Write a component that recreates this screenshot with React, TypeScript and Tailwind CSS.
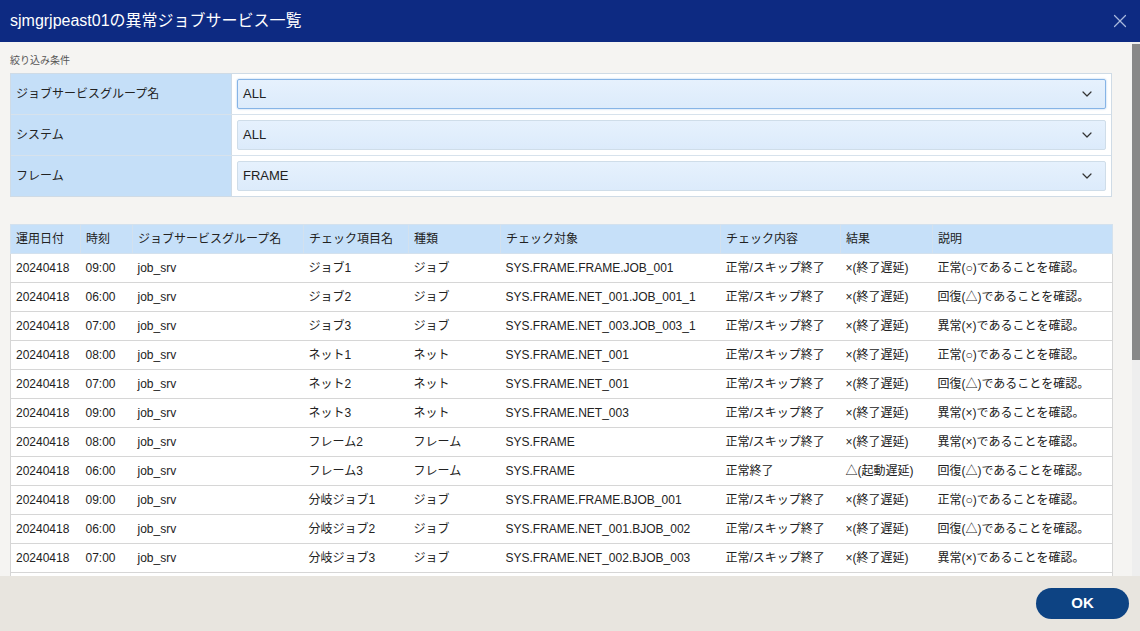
import { ChevronDown, X } from "lucide-react";

const FONT = { fontFamily: '"Liberation Sans", "Noto Sans CJK JP", sans-serif' };

interface Row {
  date: string;
  time: string;
  group: string;
  item: string;
  kind: string;
  target: string;
  content: string;
  result: string;
  desc: string;
}

const OK_DESC = "正常(○)であることを確認。";
const RECOVER_DESC = "回復(△)であることを確認。";
const NG_DESC = "異常(×)であることを確認。";

const rows: Row[] = [
  { date: "20240418", time: "09:00", group: "job_srv", item: "ジョブ1", kind: "ジョブ", target: "SYS.FRAME.FRAME.JOB_001", content: "正常/スキップ終了", result: "×(終了遅延)", desc: OK_DESC },
  { date: "20240418", time: "06:00", group: "job_srv", item: "ジョブ2", kind: "ジョブ", target: "SYS.FRAME.NET_001.JOB_001_1", content: "正常/スキップ終了", result: "×(終了遅延)", desc: RECOVER_DESC },
  { date: "20240418", time: "07:00", group: "job_srv", item: "ジョブ3", kind: "ジョブ", target: "SYS.FRAME.NET_003.JOB_003_1", content: "正常/スキップ終了", result: "×(終了遅延)", desc: NG_DESC },
  { date: "20240418", time: "08:00", group: "job_srv", item: "ネット1", kind: "ネット", target: "SYS.FRAME.NET_001", content: "正常/スキップ終了", result: "×(終了遅延)", desc: OK_DESC },
  { date: "20240418", time: "07:00", group: "job_srv", item: "ネット2", kind: "ネット", target: "SYS.FRAME.NET_001", content: "正常/スキップ終了", result: "×(終了遅延)", desc: RECOVER_DESC },
  { date: "20240418", time: "09:00", group: "job_srv", item: "ネット3", kind: "ネット", target: "SYS.FRAME.NET_003", content: "正常/スキップ終了", result: "×(終了遅延)", desc: NG_DESC },
  { date: "20240418", time: "08:00", group: "job_srv", item: "フレーム2", kind: "フレーム", target: "SYS.FRAME", content: "正常/スキップ終了", result: "×(終了遅延)", desc: NG_DESC },
  { date: "20240418", time: "06:00", group: "job_srv", item: "フレーム3", kind: "フレーム", target: "SYS.FRAME", content: "正常終了", result: "△(起動遅延)", desc: RECOVER_DESC },
  { date: "20240418", time: "09:00", group: "job_srv", item: "分岐ジョブ1", kind: "ジョブ", target: "SYS.FRAME.FRAME.BJOB_001", content: "正常/スキップ終了", result: "×(終了遅延)", desc: OK_DESC },
  { date: "20240418", time: "06:00", group: "job_srv", item: "分岐ジョブ2", kind: "ジョブ", target: "SYS.FRAME.NET_001.BJOB_002", content: "正常/スキップ終了", result: "×(終了遅延)", desc: RECOVER_DESC },
  { date: "20240418", time: "07:00", group: "job_srv", item: "分岐ジョブ3", kind: "ジョブ", target: "SYS.FRAME.NET_002.BJOB_003", content: "正常/スキップ終了", result: "×(終了遅延)", desc: NG_DESC },
];

const headers = ["運用日付", "時刻", "ジョブサービスグループ名", "チェック項目名", "種類", "チェック対象", "チェック内容", "結果", "説明"];
const widths = [70, 52, 171, 105, 92, 220, 120, 92, 180];

const filters = [
  { label: "ジョブサービスグループ名", value: "ALL", focused: true },
  { label: "システム", value: "ALL", focused: false },
  { label: "フレーム", value: "FRAME", focused: false },
];

function FilterSelect({ value, focused }: { value: string; focused: boolean }) {
  return (
    <div
      className={`flex h-[30px] items-center justify-between rounded-[2px] bg-gradient-to-b from-[#e6f1fd] to-[#dcebfb] pl-[5px] pr-[10px] text-[13px] text-[#222] ${
        focused ? "border border-[#86b4e6] shadow-[0_0_2px_#9cc3ec]" : "border border-[#cfdde9]"
      }`}
    >
      <span>{value}</span>
      <ChevronDown className="h-4 w-4 text-[#333]" strokeWidth={1.8} />
    </div>
  );
}

export default function App() {
  return (
    <div className="flex h-[631px] w-[1140px] flex-col overflow-hidden bg-[#f5f4f2]" style={FONT}>
      {/* title bar */}
      <div className="flex h-[42px] shrink-0 items-center justify-between bg-[#0d2a82] pl-[10px] pr-[9px]">
        <span className="text-[16px] text-white">sjmgrjpeast01の異常ジョブサービス一覧</span>
        <X className="h-[22px] w-[22px] text-[#a9b8dc]" strokeWidth={1.3} />
      </div>

      {/* body */}
      <div className="flex min-h-0 flex-1">
        <div className="min-w-0 flex-1 overflow-hidden pl-[10px] pr-[20px]">
          <div className="pt-[11px] text-[10px] leading-[15px] text-[#555]">絞り込み条件</div>

          <div className="mt-[5px] border border-[#cfdbe6] bg-white">
            {filters.map((f, i) => (
              <div key={f.label} className={`flex ${i > 0 ? "h-[41px] border-t border-[#d7e2ec]" : "h-[40px]"}`}>
                <div className="flex w-[221px] items-center border-r border-[#cfdbe6] bg-[#c5dff8] pl-[5px] text-[12px] text-[#222]">
                  {f.label}
                </div>
                <div className="flex flex-1 items-center px-[5px]">
                  <div className="flex-1">
                    <FilterSelect value={f.value} focused={f.focused} />
                  </div>
                </div>
              </div>
            ))}
          </div>

          <table className="mt-[27px] w-[1102px] table-fixed border-collapse bg-white text-[12px] text-[#222]">
            <colgroup>
              {widths.map((w, i) => (
                <col key={i} style={{ width: w }} />
              ))}
            </colgroup>
            <thead>
              <tr className="h-[29px] bg-[#c6e0f9]">
                {headers.map((h) => (
                  <th key={h} className="border border-[#d3e1ee] pl-[5px] text-left font-normal">
                    {h}
                  </th>
                ))}
              </tr>
            </thead>
            <tbody>
              {rows.map((r, i) => (
                <tr key={i} className="h-[29px] border-x border-[#d6d6d6]">
                  {[r.date, r.time, r.group, r.item, r.kind, r.target, r.content, r.result, r.desc].map((c, j) => (
                    <td key={j} className="whitespace-nowrap border-b border-[#d6d6d6] pl-[5px]">
                      {c}
                    </td>
                  ))}
                </tr>
              ))}
              <tr className="h-[29px] border-x border-[#d6d6d6]">
                <td colSpan={9} />
              </tr>
            </tbody>
          </table>
        </div>

        {/* scrollbar */}
        <div className="flex w-[8px] shrink-0 flex-col bg-[#eeeeee] pt-[2px]">
          <div className="h-[316px] bg-[#888888]" />
        </div>
      </div>

      {/* footer */}
      <div className="flex h-[55px] shrink-0 items-center justify-end bg-[#e8e5df] pr-[11px]">
        <button className="h-[31px] w-[93px] rounded-full bg-[#0d4383] text-[15px] font-bold text-white">OK</button>
      </div>
    </div>
  );
}
